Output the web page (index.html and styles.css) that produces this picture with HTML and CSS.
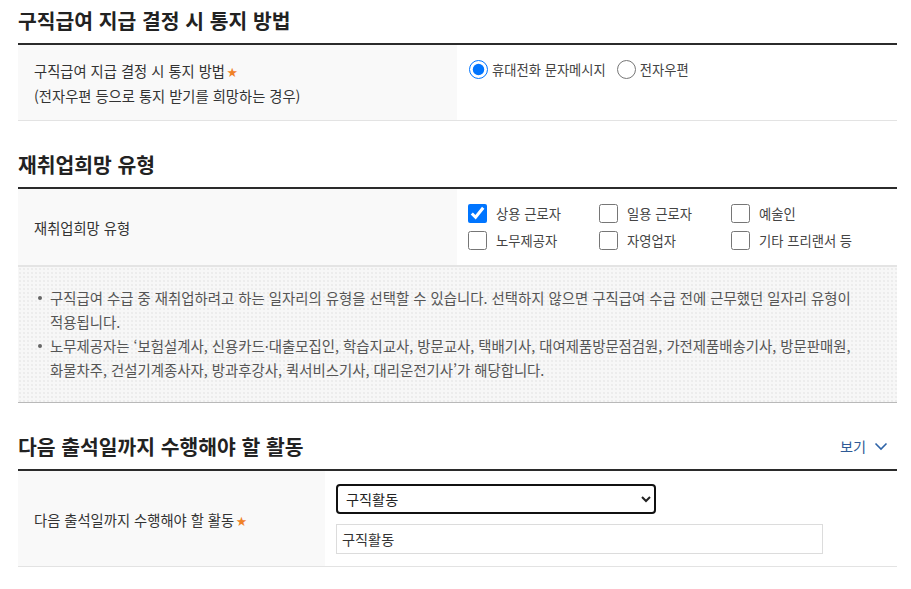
FILE: index.html
```html
<!DOCTYPE html>
<html lang="ko">
<head>
<meta charset="utf-8">
<title>구직급여</title>
<link rel="stylesheet" href="styles.css">
</head>
<body>
<div class="page">
  <section class="sec">
    <h2 class="sec-title">구직급여 지급 결정 시 통지 방법</h2>
    <div class="form-table">
      <div class="row">
        <div class="th">
          <p>구직급여 지급 결정 시 통지 방법<span class="req">★</span></p>
          <p>(전자우편 등으로 통지 받기를 희망하는 경우)</p>
        </div>
        <div class="td">
          <div class="radios">
            <label class="opt"><input type="radio" name="notice" checked><span>휴대전화 문자메시지</span></label>
            <label class="opt"><input type="radio" name="notice"><span>전자우편</span></label>
          </div>
        </div>
      </div>
    </div>
  </section>

  <section class="sec">
    <h2 class="sec-title">재취업희망 유형</h2>
    <div class="form-table">
      <div class="row thick">
        <div class="th"><p>재취업희망 유형</p></div>
        <div class="td">
          <div class="checks">
            <label class="chk"><input type="checkbox" checked><span>상용 근로자</span></label>
            <label class="chk"><input type="checkbox"><span>일용 근로자</span></label>
            <label class="chk"><input type="checkbox"><span>예술인</span></label>
            <label class="chk"><input type="checkbox"><span>노무제공자</span></label>
            <label class="chk"><input type="checkbox"><span>자영업자</span></label>
            <label class="chk"><input type="checkbox"><span>기타 프리랜서 등</span></label>
          </div>
        </div>
      </div>
    </div>
    <div class="info">
      <ul>
        <li>구직급여 수급 중 재취업하려고 하는 일자리의 유형을 선택할 수 있습니다. 선택하지 않으면 구직급여 수급 전에 근무했던 일자리 유형이 적용됩니다.</li>
        <li>노무제공자는 ‘보험설계사, 신용카드·대출모집인, 학습지교사, 방문교사, 택배기사, 대여제품방문점검원, 가전제품배송기사, 방문판매원, 화물차주, 건설기계종사자, 방과후강사, 퀵서비스기사, 대리운전기사’가 해당합니다.</li>
      </ul>
    </div>
  </section>

  <section class="sec">
    <h2 class="sec-title">다음 출석일까지 수행해야 할 활동
      <a class="more" href="#">보기
        <svg width="14" height="9" viewBox="0 0 14 9"><path d="M1.5 1.5 L7 7 L12.5 1.5" fill="none" stroke="#2f64a8" stroke-width="1.6"/></svg>
      </a>
    </h2>
    <div class="form-table">
      <div class="row">
        <div class="th narrow"><p>다음 출석일까지 수행해야 할 활동<span class="req">★</span></p></div>
        <div class="td stack">
          <select class="sel">
            <option>구직활동</option>
          </select>
          <input class="txt" type="text" value="구직활동">
        </div>
      </div>
    </div>
  </section>
</div>
</body>
</html>
```

FILE: styles.css
```css
html, body {
  margin: 0;
  padding: 0;
  background: #fff;
}

body {
  font-family: "Noto Sans CJK KR", "Noto Sans", sans-serif;
  color: #333;
}

.page {
  padding: 0 14px 0 18px;
}

.sec + .sec {
  margin-top: 23px;
}

.sec-title {
  margin: 0;
  padding: 6px 0 9px;
  font-size: 20.4px;
  line-height: 28px;
  font-weight: 700;
  color: #222;
  display: flex;
  justify-content: space-between;
  align-items: center;
}

.more {
  display: flex;
  align-items: center;
  gap: 8px;
  margin-right: 9px;
  font-size: 14.2px;
  font-weight: 400;
  color: #2f5a96;
  text-decoration: none;
}

.form-table {
  border-top: 2px solid #2b2b2b;
}

.row {
  display: flex;
  border-bottom: 1px solid #e3e3e3;
}

.row.thick {
  border-bottom: 2px solid #e4e4e4;
}

.th {
  width: 439px;
  flex: none;
  box-sizing: border-box;
  padding: 13px 16px 12px;
  background: #f9f9f9;
  display: flex;
  flex-direction: column;
  justify-content: center;
  font-size: 14.3px;
  line-height: 25px;
  color: #333;
}

.th.narrow {
  width: 307px;
}

.th p {
  margin: 0;
  height: 25px;
}

.req {
  color: #f08228;
  font-size: 10.5px;
  line-height: 0;
  margin-left: 2px;
  position: relative;
  top: -1px;
}

.td {
  flex: 1;
  padding: 11px 11px;
  background: #fff;
}

.td.stack {
  padding: 13px 11px 12px;
  display: flex;
  flex-direction: column;
  gap: 10px;
}

.radios {
  display: flex;
  gap: 10px;
}

.opt, .chk {
  display: flex;
  align-items: center;
  height: 27px;
  font-size: 13.3px;
  color: #444;
}

.opt input {
  width: 19px;
  height: 19px;
  margin: 0 4px 0 1px;
}

.checks {
  display: grid;
  grid-template-columns: 131px 132px 131px;
}

.chk input {
  width: 19px;
  height: 19px;
  margin: 0 9px 0 0;
}

.info {
  background-color: #f7f7f7;
  background-image: radial-gradient(circle, #ececec 0.7px, transparent 1px);
  background-size: 4px 4px;
  border-bottom: 1px solid #b9b9b9;
  padding: 19px 20px 20px 32px;
}

.info ul {
  margin: 0;
  padding: 0;
  list-style: none;
}

.info li {
  position: relative;
  font-size: 14.4px;
  line-height: 24px;
  color: #555;
  word-break: keep-all;
}

.info li::before {
  content: "";
  position: absolute;
  left: -12px;
  top: 10px;
  width: 4px;
  height: 4px;
  border-radius: 50%;
  background: #666;
}

.sel {
  width: 320px;
  height: 30px;
  box-sizing: border-box;
  border: 2px solid #111;
  border-radius: 4px;
  padding: 0 4px;
  font-family: "Noto Sans CJK KR", "Noto Sans", sans-serif;
  font-size: 14.2px;
  color: #222;
  background: #fff;
}

.txt {
  width: 487px;
  height: 30px;
  box-sizing: border-box;
  border: 1px solid #dcdcdc;
  padding: 0 5px;
  font-family: "Noto Sans CJK KR", "Noto Sans", sans-serif;
  font-size: 14.2px;
  color: #333;
  outline: none;
}
```
